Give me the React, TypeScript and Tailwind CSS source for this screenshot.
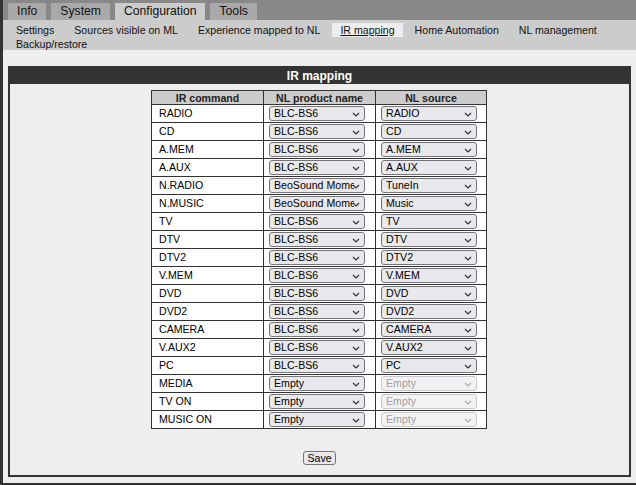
import React from "react";

const rows: [string, string, string, boolean?][] = [
  ["RADIO", "BLC-BS6", "RADIO"],
  ["CD", "BLC-BS6", "CD"],
  ["A.MEM", "BLC-BS6", "A.MEM"],
  ["A.AUX", "BLC-BS6", "A.AUX"],
  ["N.RADIO", "BeoSound Moment", "TuneIn"],
  ["N.MUSIC", "BeoSound Moment", "Music"],
  ["TV", "BLC-BS6", "TV"],
  ["DTV", "BLC-BS6", "DTV"],
  ["DTV2", "BLC-BS6", "DTV2"],
  ["V.MEM", "BLC-BS6", "V.MEM"],
  ["DVD", "BLC-BS6", "DVD"],
  ["DVD2", "BLC-BS6", "DVD2"],
  ["CAMERA", "BLC-BS6", "CAMERA"],
  ["V.AUX2", "BLC-BS6", "V.AUX2"],
  ["PC", "BLC-BS6", "PC"],
  ["MEDIA", "Empty", "Empty", true],
  ["TV ON", "Empty", "Empty", true],
  ["MUSIC ON", "Empty", "Empty", true],
];

function Chevron({ disabled }: { disabled?: boolean }) {
  return (
    <svg width="8" height="5" viewBox="0 0 8 5" className="absolute right-[4px] top-[5px]">
      <path d="M1 1 L4 4 L7 1" fill="none" stroke={disabled ? "#aaa" : "#333"} strokeWidth="1.2" />
    </svg>
  );
}

function FakeSelect({ value, disabled }: { value: string; disabled?: boolean }) {
  return (
    <div
      className={
        "relative h-[15px] w-[96px] overflow-hidden rounded-[3px] border pl-[4px] " +
        (disabled ? "border-[#c8c8cc] bg-[#f2f2f4] text-[#a0a0a0]" : "border-[#76767a] bg-[#e9e9ed] text-black")
      }
    >
      <div className="w-[80px] overflow-hidden whitespace-nowrap text-[10.6px] leading-[13px]">{value}</div>
      <Chevron disabled={disabled} />
    </div>
  );
}

export default function App() {
  const tabs = ["Info", "System", "Configuration", "Tools"];
  const sub = ["Settings", "Sources visible on ML", "Experience mapped to NL", "IR mapping", "Home Automation", "NL management", "Backup/restore"];
  return (
    <div
      className="h-[485px] w-[636px] overflow-hidden bg-[#333] pl-[3px]"
      style={{ fontFamily: '"Liberation Sans", Arial, sans-serif' }}
    >
      <div className="flex h-[483px] flex-col bg-[#eee]">
        {/* tab bar */}
        <div className="flex h-[20px] items-end gap-[5px] bg-[#888] pl-[5px]">
          {tabs.map((t) => (
            <div
              key={t}
              className={
                "flex h-[17px] items-center px-[9px] text-[12.2px] leading-none text-[#111] " +
                (t === "Configuration" ? "bg-[#ccc]" : "bg-[#a9a9a9]")
              }
            >
              {t}
            </div>
          ))}
        </div>
        {/* submenu */}
        <div className="flex h-[30px] flex-wrap content-start gap-x-[4px] bg-[#ccc] pl-[5px] pt-[3px]">
          {sub.map((s) => (
            <div
              key={s}
              className={
                "flex h-[14px] items-center px-[8px] text-[10.6px] leading-none text-[#111] " +
                (s === "IR mapping" ? "bg-[#eee] underline" : "")
              }
            >
              {s}
            </div>
          ))}
        </div>
        {/* panel */}
        <div className="mx-[5px] mt-[16px] flex h-[411px] flex-col border-2 border-[#333] bg-[#eee]">
          <div className="flex h-[16px] items-center justify-center bg-[#333] text-[12px] font-bold text-white">
            IR mapping
          </div>
          <div className="mt-[6px] flex justify-center pr-[1px]">
            <table className="border-collapse border border-[#333] text-[10.6px] text-black">
              <thead>
                <tr className="h-[14px] bg-[#ccc]">
                  <th className="w-[112px] border border-[#333] p-0 text-[10.6px] font-bold leading-[12px] text-[#222]">IR command</th>
                  <th className="w-[112px] border border-[#333] p-0 text-[10.6px] font-bold leading-[12px] text-[#222]">NL product name</th>
                  <th className="w-[111px] border border-[#333] p-0 text-[10.6px] font-bold leading-[12px] text-[#222]">NL source</th>
                </tr>
              </thead>
              <tbody>
                {rows.map(([cmd, prod, src, dis]) => (
                  <tr key={cmd} className="h-[18px] bg-white">
                    <td className="border border-[#333] py-0 pl-[7px] leading-[13px]">{cmd}</td>
                    <td className="border border-[#333] py-0 pl-[5px]">
                      <FakeSelect value={prod} />
                    </td>
                    <td className="border border-[#333] py-0 pl-[5px]">
                      <FakeSelect value={src} disabled={dis} />
                    </td>
                  </tr>
                ))}
              </tbody>
            </table>
          </div>
          <div className="mt-[22px] flex justify-center">
            <div className="flex h-[14px] items-center rounded-[3px] border border-[#76767a] bg-[#e9e9ed] px-[3px] text-[10.6px] leading-none text-black">
              Save
            </div>
          </div>
        </div>
      </div>
    </div>
  );
}
